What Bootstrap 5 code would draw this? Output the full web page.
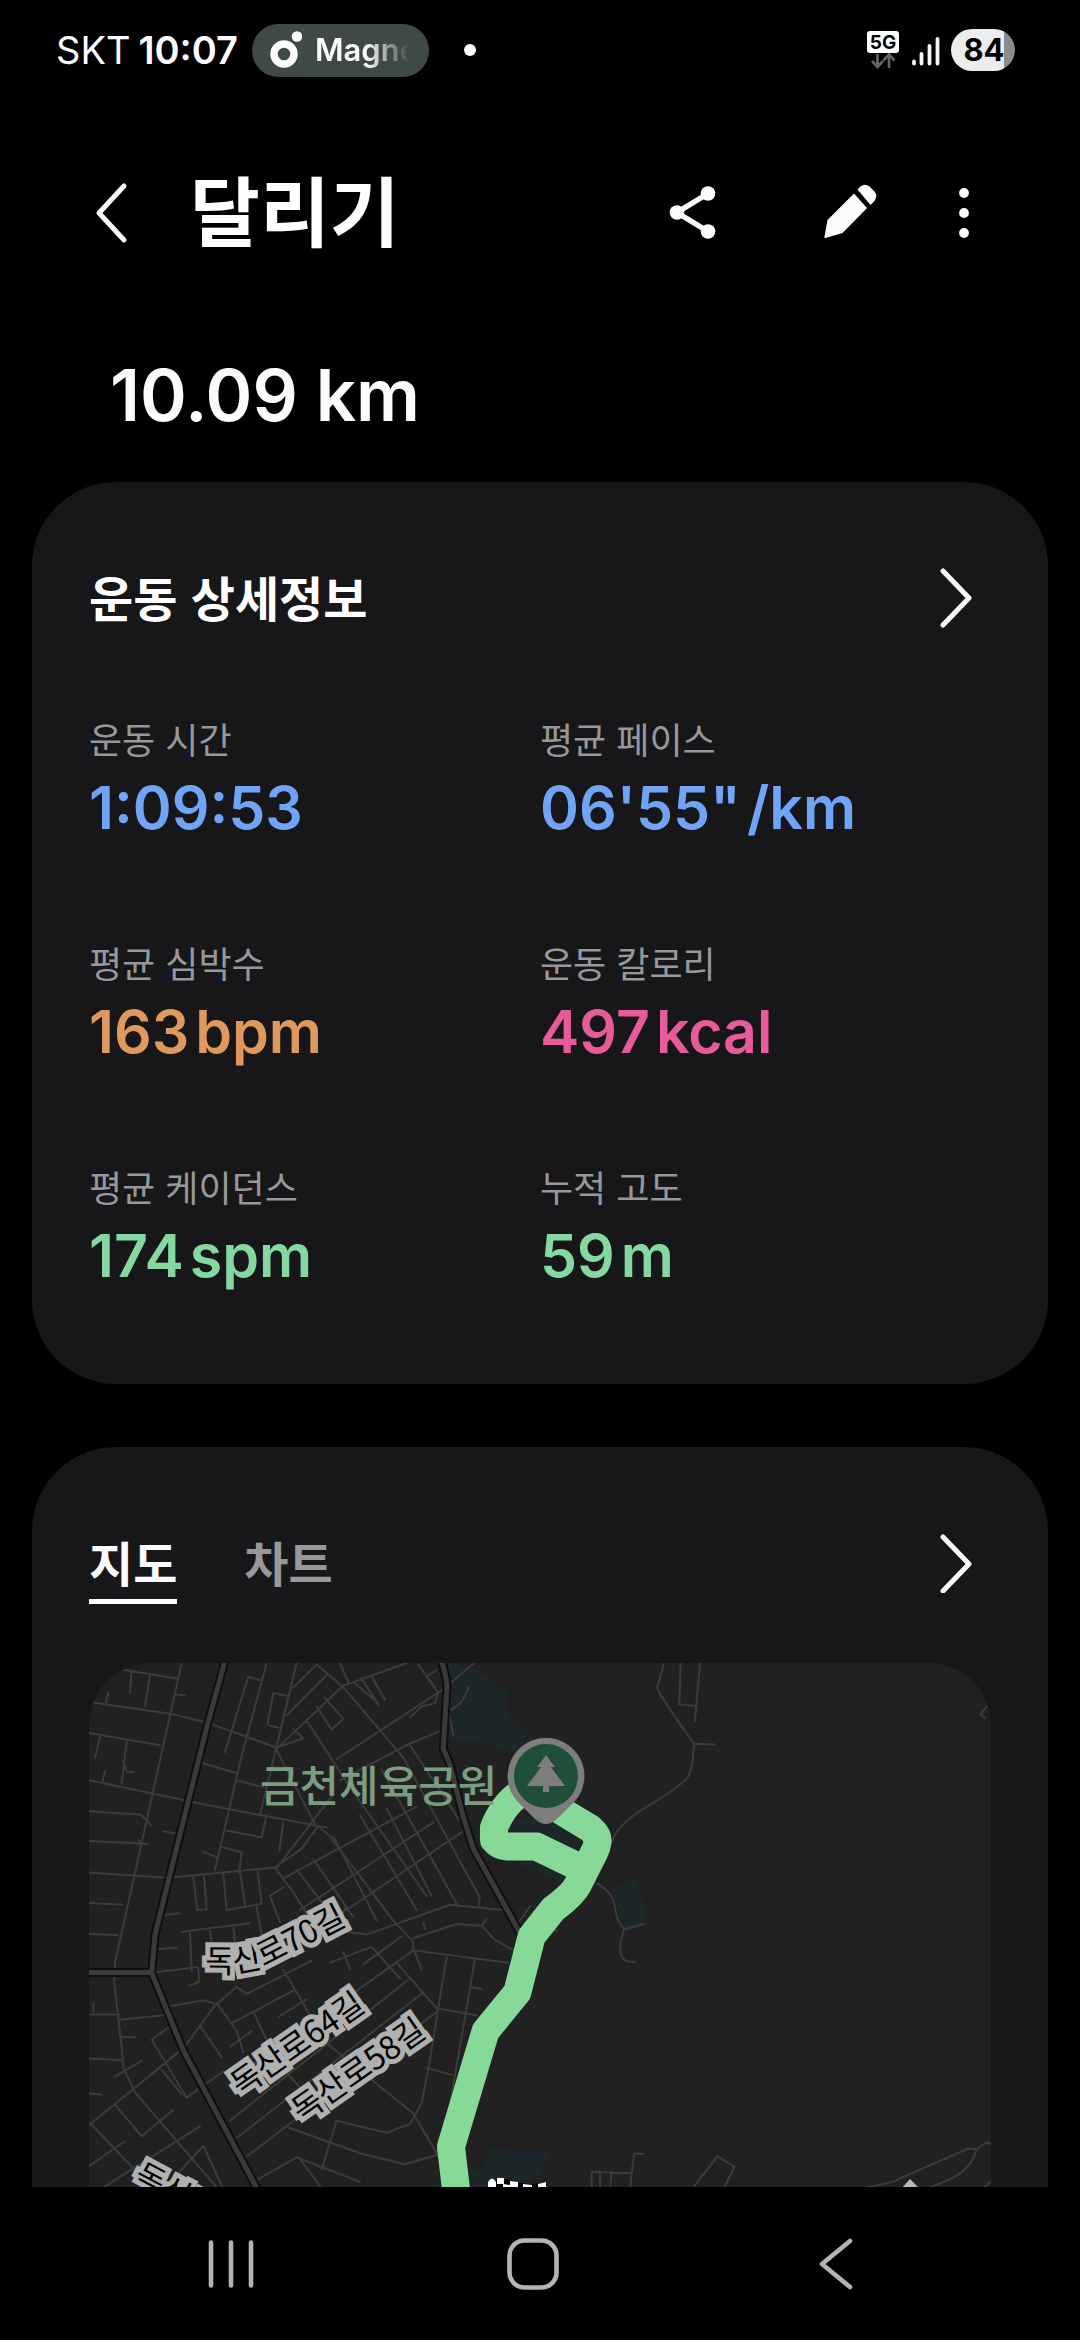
<!DOCTYPE html>
<html lang="ko" data-bs-theme="dark">
<head>
<meta charset="utf-8">
<meta name="viewport" content="width=device-width, initial-scale=1">
<title>달리기</title>
<link href="https://cdn.jsdelivr.net/npm/bootstrap@5.3.0/dist/css/bootstrap.min.css" rel="stylesheet">
<style>
  :root { --panel: #171719; --muted: #98989a; --blue: #70a4f7; --orange: #e0995c; --pink: #e85b9b; --green: #84d8a0; }
  body { background: #000; color: #fcfcff; font-family: "Noto Sans CJK KR", sans-serif; }
  .latin { font-family: Inter, "Noto Sans CJK KR", sans-serif; }
  svg { display: block; flex: none; }
  .icon-btn { padding: 0; border: 0; background: none; color: inherit; line-height: 0; }

  .status-bar { height: 100px; padding: 0 65px 0 56px; font-size: 38px; line-height: 52px; }
  .now-pill { height: 53px; width: 177px; margin-left: 14px; padding: 0 20px 0 18px; border-radius: 27px; background: #3f4a44; font-size: 31px; font-weight: 600; }
  .now-text { margin-left: 13px; overflow: hidden; white-space: nowrap; -webkit-mask-image: linear-gradient(90deg, #000 55%, transparent 100%); mask-image: linear-gradient(90deg, #000 55%, transparent 100%); }
  .more-dot { width: 12px; height: 12px; margin-left: 35px; background: #fff; }
  .battery { width: 64px; height: 42px; padding-left: 2px; border-radius: 21px; background: linear-gradient(90deg, #ececec 83%, #8c8c8c 83%); color: #000; font-size: 31px; font-weight: 700; line-height: 42px; }

  .app-bar { height: 225px; padding: 0 80px 0 80px; }
  .app-title { font-size: 76px; line-height: 100px; font-weight: 700; margin-left: 46px; padding-bottom: 10px; }
  .edit-btn { margin: 0 58px 0 90px; }
  .distance { padding: 28px 110px 45px; font-size: 71px; line-height: 84px; font-weight: 600; }

  .scroller { min-height: 0; overflow-y: auto; scrollbar-width: none; padding: 0 32px; }
  .panel { background: var(--panel); border-radius: 84px; padding: 86px 57px 88px; }
  .panel + .panel { margin-top: 63px; }
  .panel-title { font-size: 48px; line-height: 56px; font-weight: 700; }
  .metrics { row-gap: 88px; margin-top: 84px; }
  .metric-label { font-size: 36px; line-height: 52px; color: var(--muted); font-weight: 400; margin-bottom: 4px; }
  .metric-value { font-size: 59px; line-height: 80px; font-weight: 600; margin: 0; }
  .metric-unit { margin-left: 6px; }
  .c-blue { color: var(--blue); } .c-orange { color: var(--orange); } .c-pink { color: var(--pink); } .c-green { color: var(--green); }

  .view-tabs { gap: 67px; }
  .view-tab { padding: 0 0 10px; border: 0; border-bottom: 5px solid transparent; background: none; color: var(--muted); }
  .view-tab[aria-selected="true"] { color: #fcfcff; border-color: #fcfcff; }
  .map-box { margin-top: 59px; height: 640px; border-radius: 62px; overflow: hidden; background: #212121; }

  .street path { fill: none; vector-effect: non-scaling-stroke; stroke-linejoin: round; stroke-linecap: round; }
  .street .green-area path { fill: #1d272a; }
  .minor path { stroke: #3b3b3b; stroke-width: 2; }
  .major-edge path { stroke: #0f0f0f; stroke-width: 9; }
  .major path { stroke: #3a3a3a; stroke-width: 5; }
  .street .route { stroke: #86d996; stroke-width: 28; }
  .street-name { font-size: 32px; fill: #000; stroke: #b0b0b0; stroke-width: 10; paint-order: stroke; stroke-linejoin: miter; }
  .place-name { font-size: 43px; font-weight: 500; fill: #7a9d80; }

  .sys-nav { height: 153px; padding: 0 93px 0 80px; color: #b4b4b4; }
</style>
</head>
<body>
<div class="vh-100 d-flex flex-column overflow-hidden">

  <header class="status-bar latin flex-shrink-0 d-flex align-items-center">
    <span>SKT</span>
    <span class="fw-semibold ms-2">10:07</span>
    <div class="now-pill d-flex align-items-center">
      <svg width="32" height="42" viewBox="0 0 32 42" aria-hidden="true">
        <circle cx="14" cy="25" r="10" fill="none" stroke="#fff" stroke-width="7.4"/>
        <circle cx="27" cy="7.500" r="5.300" fill="#fff"/>
      </svg>
      <span class="now-text">Magne</span>
    </div>
    <span class="more-dot rounded-circle"></span>
    <div class="ms-auto d-flex align-items-center">
      <svg width="32" height="42" viewBox="0 0 32 42" role="img" aria-label="5G">
        <rect width="32" height="22" y="2" rx="3" fill="#fff"/>
        <text x="16" y="20" text-anchor="middle" font-family="Inter" font-weight="700" font-size="19" fill="#000">5G</text>
        <path d="M10.500 25v12M5 32l5.500 6 5.500-6M22 39V26M16.500 31.500l5.500-6 5.500 6" fill="none" stroke="#666" stroke-width="2.600"/>
      </svg>
      <svg class="ms-2" width="36" height="42" viewBox="0 0 36 42" aria-hidden="true">
        <path d="M7 32.500v2M14.500 25v9.500M22.500 17v17.500M30.500 10v24.500" stroke="#f4f4f4" stroke-width="3.800" stroke-linecap="round"/>
      </svg>
      <span class="battery text-center ms-2">84</span>
    </div>
  </header>

  <nav class="app-bar flex-shrink-0 d-flex align-items-center" aria-label="상단">
    <button class="icon-btn" type="button" aria-label="뒤로">
      <svg width="64" height="64" viewBox="0 0 64 64"><path d="M44 5L19 32l25 27" fill="none" stroke="currentColor" stroke-width="5" stroke-linecap="round" stroke-linejoin="round"/></svg>
    </button>
    <h1 class="app-title mb-0">달리기</h1>
    <div class="ms-auto d-flex align-items-center">
      <button class="icon-btn" type="button" aria-label="공유">
        <svg width="64" height="64" viewBox="0 0 64 64"><path d="M48 12.500L17 31.500l31 19" fill="none" stroke="currentColor" stroke-width="5.500"/><g fill="currentColor"><circle cx="48" cy="12.500" r="7.300"/><circle cx="17" cy="31.500" r="7.300"/><circle cx="48" cy="50.500" r="7.300"/></g></svg>
      </button>
      <button class="icon-btn edit-btn" type="button" aria-label="편집">
        <svg width="64" height="64" viewBox="77 0 64 64"><g fill="currentColor"><path d="M104 57q-1.500.3-1-1.500l3-16.500 26.500-26.500L145.500 27 121 52z" transform="translate(-15.500 0)"/><path d="M120.500 8.500l3-3q4.500-3.500 9 0l5 5q3.500 4 0 9.500l-4 4z"/></g></svg>
      </button>
      <button class="icon-btn" type="button" aria-label="더보기">
        <svg width="64" height="64" viewBox="0 0 64 64"><g fill="currentColor"><circle cx="28" cy="12" r="4.900"/><circle cx="28" cy="32" r="4.900"/><circle cx="28" cy="52" r="4.900"/></g></svg>
      </button>
    </div>
  </nav>

  <p class="distance latin flex-shrink-0 mb-0">10.09 km</p>

  <main class="scroller flex-grow-1">
    <section class="panel">
      <div class="d-flex justify-content-between align-items-start">
        <h2 class="panel-title mb-0">운동 상세정보</h2>
        <button class="icon-btn" type="button" aria-label="운동 상세정보 열기">
          <svg width="60" height="60" viewBox="0 0 60 60"><path d="M12 3l26 27-26 27" fill="none" stroke="currentColor" stroke-width="5" stroke-linecap="round" stroke-linejoin="round"/></svg>
        </button>
      </div>
      <dl class="metrics row gx-0 mb-0">
        <div class="col-6"><dt class="metric-label">운동 시간</dt><dd class="metric-value latin c-blue">1:09:53</dd></div>
        <div class="col-6"><dt class="metric-label">평균 페이스</dt><dd class="metric-value latin c-blue">06'55"<span class="metric-unit">/km</span></dd></div>
        <div class="col-6"><dt class="metric-label">평균 심박수</dt><dd class="metric-value latin c-orange">163<span class="metric-unit">bpm</span></dd></div>
        <div class="col-6"><dt class="metric-label">운동 칼로리</dt><dd class="metric-value latin c-pink">497<span class="metric-unit">kcal</span></dd></div>
        <div class="col-6"><dt class="metric-label">평균 케이던스</dt><dd class="metric-value latin c-green">174<span class="metric-unit">spm</span></dd></div>
        <div class="col-6"><dt class="metric-label">누적 고도</dt><dd class="metric-value latin c-green">59<span class="metric-unit">m</span></dd></div>
      </dl>
    </section>

    <section class="panel">
      <div class="d-flex justify-content-between align-items-start">
        <div class="view-tabs d-flex" role="tablist">
          <button class="view-tab panel-title" type="button" role="tab" aria-selected="true">지도</button>
          <button class="view-tab panel-title" type="button" role="tab" aria-selected="false">차트</button>
        </div>
        <button class="icon-btn" type="button" aria-label="지도 열기">
          <svg width="60" height="60" viewBox="0 0 60 60"><path d="M12 4l26 27-26 27" fill="none" stroke="currentColor" stroke-width="5" stroke-linecap="round" stroke-linejoin="round"/></svg>
        </button>
      </div>
      <div class="map-box">
        <svg width="100%" height="100%" viewBox="0 0 902 640" preserveAspectRatio="xMidYMin slice" role="img" aria-label="달리기 경로 지도">
          <g class="street" transform="translate(-29 -23) scale(.3333 .3507)">
            <!-- park and green areas -->
            <g class="green-area">
              <path d="M1165 60l85 25 95 65-5 60 80 70 30 60-90-20-100-30-95-5z"/>
              <path d="M1340 540l100-60 130 90-30 130-160-55z"/>
              <path d="M1655 705l75-25 35 130-70 20z"/>
              <path d="M1290 1450l185 15-40 60-70 60h-290l80-60 110-10z"/>
            </g>
            <g class="minor">
              <path d="M190 85l160 25M365 66L165 920l-2 60 22 180 5 60 35 70 380 420M215 90l-5 60M270 100l-15 90M100 178l230 32 110 25 205 70 120 220M345 155l30 3M145 150l-8 30M88 265l212 35M120 275l-15 60M200 290l-15 120M190 345l10 30 22 2M88 400l350 70 335 60 30 5M88 488l155 10 30 30M88 573l175 8M135 375l-8 30M88 663l235 15 330-30M88 750l100 5M88 838l85 3M235 570l10 10"/>
              <path d="M310 545l45 8M430 605l45 15M425 350l105 30M620 66L545 330 465 655M600 115l-35-10-70 215M710 66L600 500M685 160l-45-8-18 90 33 8M500 543l105 20 15-65M670 520l-12 80M485 590l60 15-8 60M530 400l80 20"/>
              <path d="M400 675l12 95 28-2-8-95M490 665l10 105 105-18-12-95M540 660l15 95M310 785l48-6M365 832l205-24M450 830l8 60M390 835l5 110M520 820l5 40M590 760l15 80M285 882l68-5M280 948l130-15M415 935l2 40-30 10"/>
              <path d="M650 645l75-50 50-65 35 30 190 240 60 60 0 20 25 60M650 310l200-180 190-64M645 650l55 70 60 90 80 20 80 10 250-85 160 15M840 66l25 55M700 135l70-65 80 65 180 200 230 400-5 25M680 215l120-115M770 190l45 65 35-30-55-60M655 305l75-25-30-25M740 230l130 190 230 310M880 120l75 60M905 110l50 75M935 105l40 65"/>
              <path d="M830 340L1150 140 1240 68M1075 70l60 80-10 30-40 10-35 30M1100 105l30-20M840 400l210-105 90-35M820 440l-170 210M670 680l400-205M720 770l400-250M860 770l350-225M1050 300l160 230M965 370l230 390M760 625l120 165M710 655l90 110M820 560l130 240M900 500l170 270M980 480l135 250M630 730l40-25M630 730l30 75M860 760l-30 50"/>
              <path d="M1060 850l130-40 75 5 40 40 65 35M1265 815l15-20M1090 805l5 20M1060 885l285 35M1060 885L520 1250M1160 905l-55 320-20 95-35 60-70 25-90-20-60-15-45 140M1245 910l-90 500-30 60-90 25-130-30-220-75M1235 990l30 5M1130 1050l120 20M1010 920l120 130M810 920l125-45 85 90M850 890l20 50M910 925l115-80M1050 965L510 1370M1090 1005L530 1420M1130 1060L550 1480M1100 1220l75 20"/>
              <path d="M670 940l130 210 260 200 80 130M325 1045l105-18 40 12 60-50 30 20 195-95M370 1165l100-130 60 80 20 60M180 1083l130-13M88 1068h90M185 1133h43M100 1035v25M88 1193l100 5M275 1140l50-35M275 1140l105 165 110-75M88 1383l270-210M165 1245l80-45M88 1293l35 3M305 1225l60 70M165 1325l80 90 95-75M88 1375l200 200M88 1500l105-70M420 1100l65 90M510 1160l65-45M520 1090l180-90M580 1060l40 80M655 1075l85-50M685 1240l60 60M310 1567l120-125 60 125M590 1540l120-65 190 70M120 1567l300-180M720 1480l70 90"/>
              <path d="M1170 200q40-15 55-65M1165 200l15 70M1365 820l45-60M1440 828h50M1812 66l-20 70q5 20 110 160l62 2M1902 298q-5 80-20 95-30 30-100 70-110 60-125 110M1862 66l-4 118 48 4M1920 66l-15 165M1612 695q45 25 50 55l10 45 20 30q-20 60-5 80 10 15 38 12M1695 825l55-15M2780 190l-18 22 12 10M1595 1567v-50l120 3 8-55h28M1620 1515v50M1655 1517l-5 50M1715 1520l-5 47M1895 1567l78-95 50 30-35 70M2420 1560q80-10 100-25l205-85 25 2 30-20 18 8M2750 1452q-15 60-90 90l-80 30M2790 1545l-25 25"/>
            </g>
            <g class="major-edge"><path d="M495 60L440 250 285 840l-10 110 95 220 230 410M80 948h195M1145 60q20 60 15 90l-10 160 20 45 40 150 30 90 140 240"/></g>
            <g class="major"><path d="M495 60L440 250 285 840l-10 110 95 220 230 410M80 948h195M1145 60q20 60 15 90l-10 160 20 45 40 150 30 90 140 240"/></g>
            <path class="route" d="M1400 430q-60 20-98 105v35q15 18 38 19h90l130 60M1500 485l90 52q25 20 23 38-2 15-10 30l-48 90q-15 30-75 72l-65 78-43 160-95 110-104 330 25 200"/>
          </g>
          <text class="place-name" x="171" y="139">금천체육공원</text>
          <defs><path id="road70" d="M116 309Q157 312 181 301L278 251"/></defs>
          <text class="street-name"><textPath href="#road70">독산로70길</textPath></text>
          <text class="street-name" transform="translate(152 434) rotate(-35)">독산로64길</text>
          <text class="street-name" transform="translate(213 460) rotate(-35)">독산로58길</text>
          <text class="street-name" transform="translate(43 519) rotate(28)">독산로</text>
          <!-- finish flag -->
          <g>
            <path d="M399 640V519q4-7 8 0v121z" fill="#fff"/>
            <path d="M407 515q12 0 20 4 14 4 30 0v40q-16 4-30 0-10-4-20-4z" fill="#000"/>
            <path d="M408 515h7v6h-7zM421 518l8 1v6l-8-1zM434 521l9 1v6h-9zM449 521l8-2v6l-8 1zM414 521l7 1v6h-7zM429 525l6 1v6h-6z" fill="#fff"/>
          </g>
          <path d="M812 526l9-10 10 10z" fill="#b8b8b8"/>
          <!-- park pin -->
          <path d="M457 75a38 38 0 0 1 29 63l-18 18q-11 10-22 0l-18-18a38 38 0 0 1 29-63z" fill="#7d7d7d"/>
          <circle cx="457" cy="113" r="32" fill="#204f39"/>
          <path d="M457 92l9 12h-4l14 19h-16v6h-6v-6h-16l14-19h-4z" fill="#7d7d7d"/>
        </svg>
      </div>
    </section>
  </main>

  <nav class="sys-nav flex-shrink-0 d-flex align-items-center" aria-label="시스템">
    <button class="icon-btn flex-fill d-flex justify-content-center" type="button" aria-label="최근 앱">
      <svg width="56" height="56" viewBox="0 0 56 56"><path d="M8 6.500v43M28 6.500v43M48 6.500v43" stroke="currentColor" stroke-width="4.600" stroke-linecap="round"/></svg>
    </button>
    <button class="icon-btn flex-fill d-flex justify-content-center" type="button" aria-label="홈">
      <svg width="56" height="56" viewBox="0 0 56 56"><rect x="4.500" y="4.500" width="47" height="47" rx="15" fill="none" stroke="currentColor" stroke-width="4.600"/></svg>
    </button>
    <button class="icon-btn flex-fill d-flex justify-content-center" type="button" aria-label="뒤로 가기">
      <svg width="56" height="56" viewBox="0 0 56 56"><path d="M42 5L14 28l28 23" fill="none" stroke="currentColor" stroke-width="4.600" stroke-linecap="round" stroke-linejoin="round"/></svg>
    </button>
  </nav>
</div>
<script src="https://cdn.jsdelivr.net/npm/bootstrap@5.3.0/dist/js/bootstrap.bundle.min.js"></script>
</body>
</html>
